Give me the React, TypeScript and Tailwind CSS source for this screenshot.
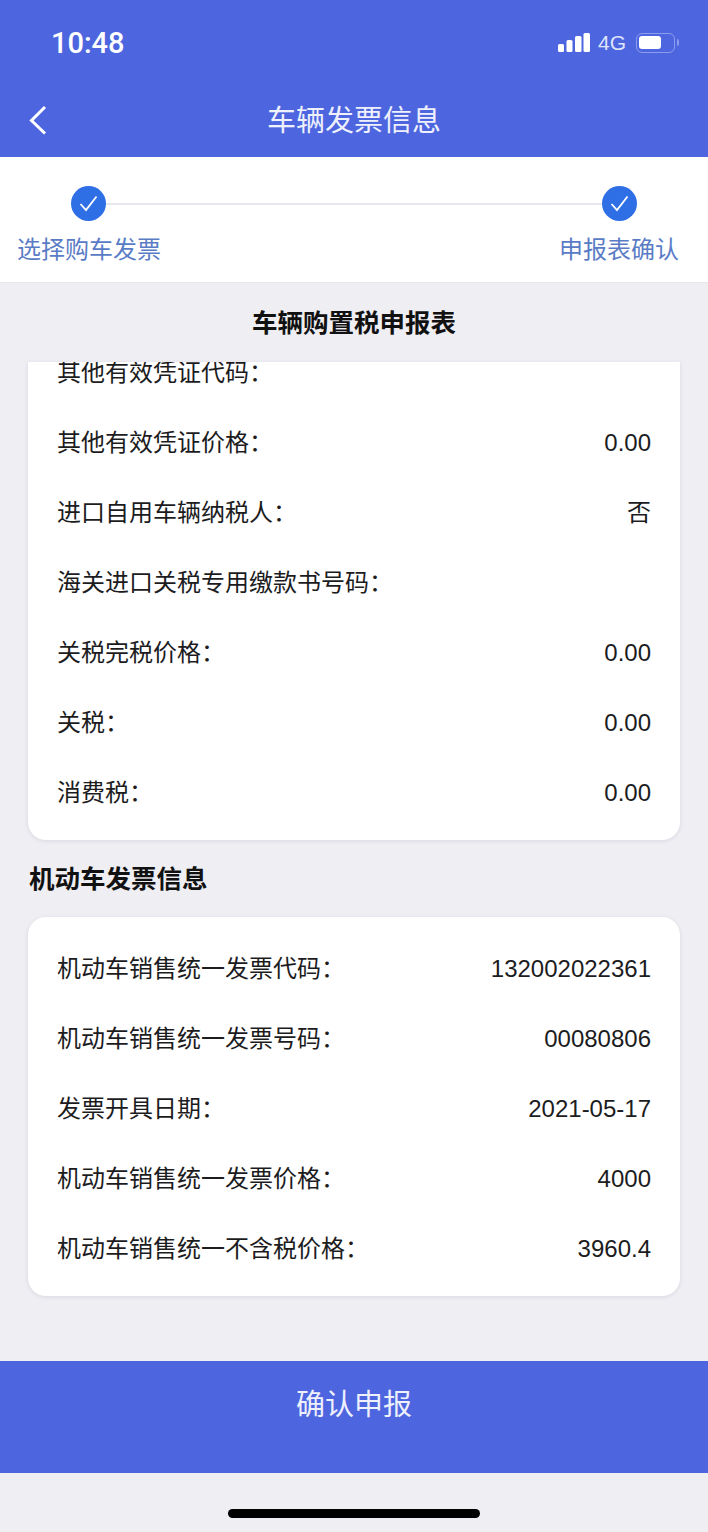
const FONT = "font-['Liberation_Sans','Noto_Sans_CJK_SC',sans-serif]";

function Row({ label, value }: { label: string; value?: string }) {
  return (
    <div className="flex h-[70px] items-center justify-between pl-[29px] pr-[29px] pt-[2px] text-[24px] leading-none text-[#1c1c1e]">
      <span>{label}</span>
      {value ? <span>{value}</span> : null}
    </div>
  );
}

function Check() {
  return (
    <div className="flex h-[35px] w-[35px] shrink-0 items-center justify-center rounded-full bg-[#2f6fe6]">
      <svg width="21" height="19" viewBox="0 0 21 19" fill="none">
        <path d="M2.5 10 L8 16 L18.5 2.5" stroke="#ffffff" strokeWidth="1.8" />
      </svg>
    </div>
  );
}

export default function App() {
  const first = [
    ["其他有效凭证价格：", "0.00"],
    ["进口自用车辆纳税人：", "否"],
    ["海关进口关税专用缴款书号码：", ""],
    ["关税完税价格：", "0.00"],
    ["关税：", "0.00"],
    ["消费税：", "0.00"],
  ];
  const second = [
    ["机动车销售统一发票代码：", "132002022361"],
    ["机动车销售统一发票号码：", "00080806"],
    ["发票开具日期：", "2021-05-17"],
    ["机动车销售统一发票价格：", "4000"],
    ["机动车销售统一不含税价格：", "3960.4"],
  ];
  return (
    <div className={`flex h-[1532px] w-[708px] flex-col overflow-hidden bg-[#eeeef3] ${FONT}`}>
      <header className="h-[157px] bg-[#4d66df] text-white">
        <div className="flex h-[85px] items-center justify-between pl-[51px] pr-[29px]">
          <span className="pt-[2px] font-['Roboto',sans-serif] text-[29px] font-medium leading-none">10:48</span>
          <div className="flex items-center">
            <svg width="32" height="19" viewBox="0 0 32 19" fill="#ffffff" className="mr-[8px]">
              <rect x="0" y="11" width="6" height="8" rx="1.5" />
              <rect x="8.5" y="7" width="6" height="12" rx="1.5" />
              <rect x="17" y="3" width="6.5" height="16" rx="1.5" />
              <rect x="25.5" y="0" width="6.5" height="19" rx="1.5" />
            </svg>
            <span className="mr-[10px] text-[21px] leading-none text-[#dfe4fa]">4G</span>
            <div className="flex h-[20px] w-[39px] items-center rounded-[6px] border-[1.5px] border-[#8c9cec] p-[2px]">
              <div className="h-[13px] w-[22px] rounded-[3px] bg-white" />
            </div>
            <div className="ml-[2px] h-[7px] w-[2px] rounded-r-full bg-[#8c9cec]" />
          </div>
        </div>
        <div className="relative flex h-[72px] items-center justify-center">
          <svg width="20" height="30" viewBox="0 0 20 30" fill="none" className="absolute left-[28px] top-[20px]">
            <path d="M17 2 L3.5 15.5 L17 28.5" stroke="#ffffff" strokeWidth="3" />
          </svg>
          <span className="text-[29px] leading-none text-[#eef0fc]">车辆发票信息</span>
        </div>
      </header>

      <section className="h-[126px] border-b border-[#e8e8ec] bg-white">
        <div className="flex items-center pl-[71px] pr-[71px] pt-[29px]">
          <Check />
          <div className="h-[2px] flex-1 bg-[#e7e7ec]" />
          <Check />
        </div>
        <div className="mt-[17px] flex justify-between pl-[17px] pr-[29px] text-[24px] leading-none text-[#5a7cc6]">
          <span>选择购车发票</span>
          <span>申报表确认</span>
        </div>
      </section>

      <h2 className="flex h-[79px] items-center justify-center pt-[2px] text-[25.5px] font-bold leading-none text-[#111111]">
        车辆购置税申报表
      </h2>

      <div className="mx-[28px] h-[478px] overflow-hidden rounded-b-[18px] bg-white shadow-[0_1px_4px_rgba(60,60,90,0.12)]">
        <div className="-mt-[25px]">
          <Row label="其他有效凭证代码：" />
          {first.map(([l, v]) => (
            <Row key={l} label={l} value={v} />
          ))}
        </div>
      </div>

      <h3 className="flex h-[77px] items-center pl-[29px] pt-[2px] text-[25.5px] font-bold leading-none text-[#111111]">
        机动车发票信息
      </h3>

      <div className="mx-[28px] h-[379px] rounded-[18px] bg-white pt-[16px] shadow-[0_1px_4px_rgba(60,60,90,0.12)]">
        {second.map(([l, v]) => (
          <Row key={l} label={l} value={v} />
        ))}
      </div>

      <button className="mt-[65px] flex h-[112px] w-full items-center justify-center bg-[#4d66df] pb-[23px] text-[29px] leading-none text-[#eef0fc]">
        确认申报
      </button>

      <div className="mx-auto mt-[36px] h-[9px] w-[252px] rounded-full bg-black" />
    </div>
  );
}
